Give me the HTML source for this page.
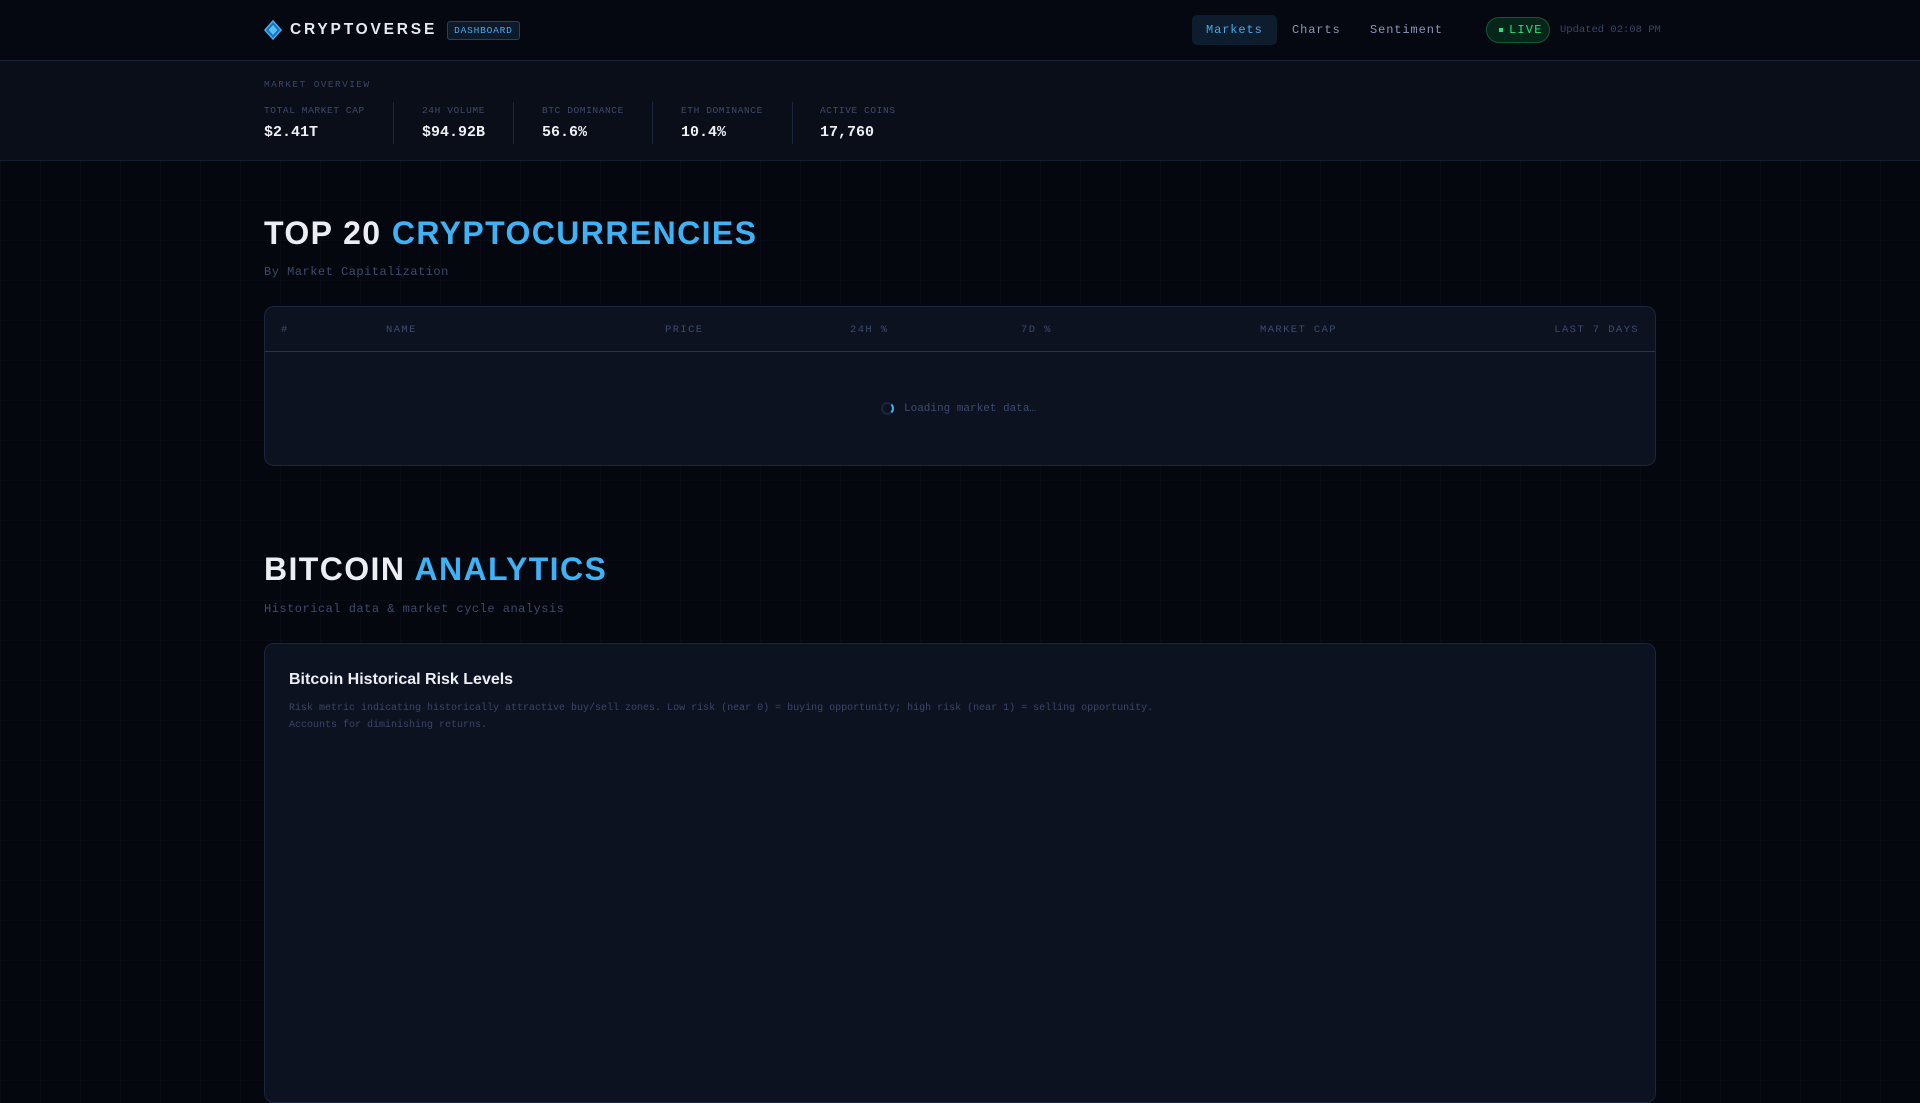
<!DOCTYPE html>
<html><head><meta charset="utf-8"><style>
*{margin:0;padding:0;box-sizing:border-box}
body{width:1920px;height:1080px;overflow:hidden;background:#05070e;font-family:"Liberation Mono",monospace;color:#e6e9f0;position:relative;
background-image:linear-gradient(rgba(40,60,100,.07) 1px,transparent 1px),linear-gradient(90deg,rgba(40,60,100,.07) 1px,transparent 1px);background-size:40px 40px}
.nav{position:absolute;left:0;top:0;width:1920px;height:61px;background:#050810;border-bottom:1px solid #1a2238}
.logo{position:absolute;left:264px;top:20px;display:flex;align-items:center}
.logo .txt{font-family:"Liberation Sans",sans-serif;font-weight:bold;font-size:15.5px;letter-spacing:2.8px;color:#e6e9f0;margin-left:8px}
.badge{margin-left:10px;border:1px solid #1f4566;background:#0c1a2a;color:#4aa8e8;font-size:9.5px;letter-spacing:.8px;padding:3px 6px;border-radius:3px}
.navlink{position:absolute;top:15px;height:30px;line-height:30px;font-size:12px;letter-spacing:.9px;color:#8a95b8;padding:0 14px;border-radius:5px}
.live{position:absolute;left:1486px;top:17px;width:64px;height:26px;border:1px solid #0f5a35;background:#052618;border-radius:13px;color:#2be07f;font-size:12px;letter-spacing:1.2px;line-height:24px;padding-left:22px}
.live:before{content:"";position:absolute;left:12px;top:10px;width:4px;height:4px;background:#2be07f}
.upd{position:absolute;left:1560px;top:24px;font-size:10.5px;color:#3a4668}
.ov{position:absolute;left:0;top:61px;width:1920px;height:100px;background:#0a0e18;border-bottom:1px solid #161d30}
.ovl{position:absolute;left:264px;top:18px;font-size:9.5px;letter-spacing:1.4px;color:#3a4668}
.stat{position:absolute;top:44px}
.stat .l{font-size:9.5px;letter-spacing:.6px;color:#3e4a6e}
.stat .v{font-size:15px;font-weight:bold;color:#eef0f6;margin-top:8px}
.sep{position:absolute;top:41px;width:1px;height:42px;background:#1c2540}
h1{position:absolute;left:264px;font-family:"Liberation Sans",sans-serif;font-weight:bold;font-size:32px;letter-spacing:1.4px;color:#eceef4}
h1 span{color:#3fb1f5}
.sub{position:absolute;left:264px;font-size:12px;letter-spacing:.5px;color:#3e4a6e}
.table{position:absolute;left:264px;top:306px;width:1392px;height:160px;background:#0c1220;border:1px solid #1c2540;border-radius:10px}
.th{position:absolute;top:17px;font-size:10.5px;letter-spacing:1.4px;color:#3e4a6e}
.hl{position:absolute;left:0;top:44px;width:100%;height:1px;background:#27315a}
.load{position:absolute;left:616px;top:95px;font-size:11px;color:#3e4a6e;display:flex;align-items:center}
.spin{width:13px;height:13px;border:2px solid #1c2540;border-right-color:#3fb1f5;border-radius:50%;margin-right:10px}
.card{position:absolute;left:264px;top:643px;width:1392px;height:460px;background:#0c1220;border:1px solid #1c2540;border-radius:10px}
.card h3{position:absolute;left:24px;top:27px;font-family:"Liberation Sans",sans-serif;font-size:16px;font-weight:bold;color:#eceef4}
.card p{position:absolute;left:24px;top:56px;font-size:10px;line-height:17px;color:#3a4668;letter-spacing:0;width:1300px}
</style></head><body>
<div class="nav">
 <div class="logo"><svg width="18" height="20" viewBox="0 0 18 20"><path d="M9 1L17 10L9 19L1 10Z" fill="#1a6fb0" stroke="#3fb1f5" stroke-width="1.5"/><path d="M9 5L13.5 10L9 15L4.5 10Z" fill="#56c0ff"/></svg><span class="txt">CRYPTOVERSE</span><span class="badge">DASHBOARD</span></div>
 <div class="navlink" style="left:1192px;background:#0d1d2e;color:#4aa8e8">Markets</div>
 <div class="navlink" style="left:1278px">Charts</div>
 <div class="navlink" style="left:1356px">Sentiment</div>
 <div class="live">LIVE</div>
 <div class="upd">Updated 02:08 PM</div>
</div>
<div class="ov">
 <div class="ovl">MARKET OVERVIEW</div>
 <div class="stat" style="left:264px"><div class="l">TOTAL MARKET CAP</div><div class="v">$2.41T</div></div>
 <div class="sep" style="left:393px"></div>
 <div class="stat" style="left:422px"><div class="l">24H VOLUME</div><div class="v">$94.92B</div></div>
 <div class="sep" style="left:513px"></div>
 <div class="stat" style="left:542px"><div class="l">BTC DOMINANCE</div><div class="v">56.6%</div></div>
 <div class="sep" style="left:652px"></div>
 <div class="stat" style="left:681px"><div class="l">ETH DOMINANCE</div><div class="v">10.4%</div></div>
 <div class="sep" style="left:792px"></div>
 <div class="stat" style="left:820px"><div class="l">ACTIVE COINS</div><div class="v">17,760</div></div>
</div>
<h1 style="top:215px">TOP 20 <span>CRYPTOCURRENCIES</span></h1>
<div class="sub" style="top:265px">By Market Capitalization</div>
<div class="table">
 <div class="th" style="left:16px">#</div>
 <div class="th" style="left:121px">NAME</div>
 <div class="th" style="left:400px">PRICE</div>
 <div class="th" style="left:585px">24H %</div>
 <div class="th" style="left:756px">7D %</div>
 <div class="th" style="left:995px">MARKET CAP</div>
 <div class="th" style="right:16px">LAST 7 DAYS</div>
 <div class="hl"></div>
 <div class="load"><div class="spin"></div>Loading market data…</div>
</div>
<h1 style="top:551px">BITCOIN <span>ANALYTICS</span></h1>
<div class="sub" style="top:602px">Historical data &amp; market cycle analysis</div>
<div class="card">
 <h3>Bitcoin Historical Risk Levels</h3>
 <p>Risk metric indicating historically attractive buy/sell zones. Low risk (near 0) = buying opportunity; high risk (near 1) = selling opportunity.<br>Accounts for diminishing returns.</p>
</div>
</body></html>
